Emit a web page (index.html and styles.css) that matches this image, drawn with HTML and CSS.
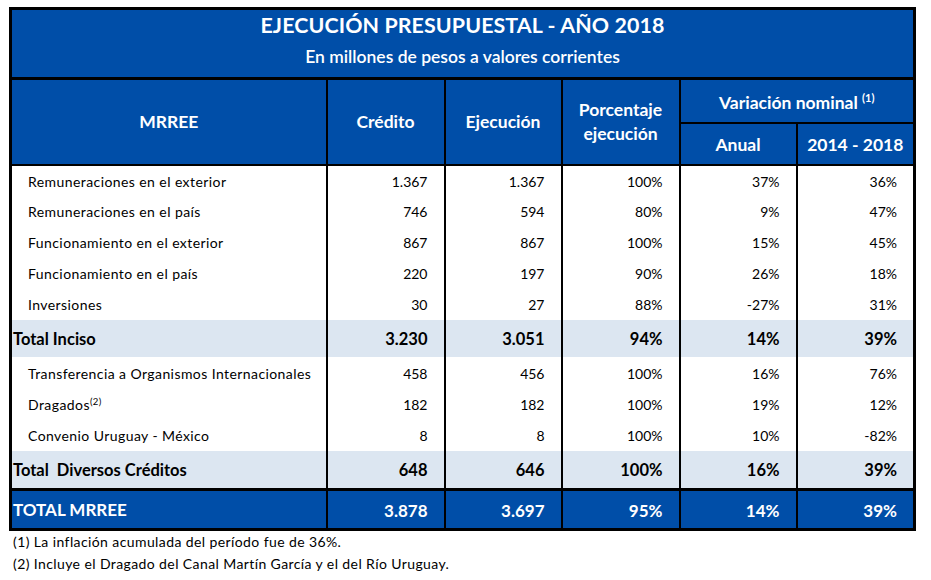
FILE: index.html
```html
<!DOCTYPE html>
<html lang="es">
<head>
<meta charset="utf-8">
<link rel="stylesheet" href="styles.css">
</head>
<body>
<div class="page">
  <table class="budget">
    <colgroup>
      <col class="c-name"><col class="c-2"><col class="c-3"><col class="c-4"><col class="c-5"><col class="c-6">
    </colgroup>
    <thead>
      <tr class="title-row">
        <th colspan="6">
          <div class="title">EJECUCIÓN PRESUPUESTAL - AÑO 2018</div>
          <div class="subtitle">En millones de pesos a valores corrientes</div>
        </th>
      </tr>
      <tr class="head-top">
        <th rowspan="2">MRREE</th>
        <th rowspan="2">Crédito</th>
        <th rowspan="2">Ejecución</th>
        <th rowspan="2">Porcentaje<br>ejecución</th>
        <th colspan="2" class="var">Variación nominal <sup>(1)</sup></th>
      </tr>
      <tr class="head-bottom">
        <th>Anual</th>
        <th>2014 - 2018</th>
      </tr>
    </thead>
    <tbody>
      <tr class="row first"><td>Remuneraciones en el exterior</td><td>1.367</td><td>1.367</td><td>100%</td><td>37%</td><td>36%</td></tr>
      <tr class="row"><td>Remuneraciones en el país</td><td>746</td><td>594</td><td>80%</td><td>9%</td><td>47%</td></tr>
      <tr class="row"><td>Funcionamiento en el exterior</td><td>867</td><td>867</td><td>100%</td><td>15%</td><td>45%</td></tr>
      <tr class="row"><td>Funcionamiento en el país</td><td>220</td><td>197</td><td>90%</td><td>26%</td><td>18%</td></tr>
      <tr class="row last"><td>Inversiones</td><td>30</td><td>27</td><td>88%</td><td>-27%</td><td>31%</td></tr>
      <tr class="subtotal"><td>Total Inciso</td><td>3.230</td><td>3.051</td><td>94%</td><td>14%</td><td>39%</td></tr>
      <tr class="row first2"><td>Transferencia a Organismos Internacionales</td><td>458</td><td>456</td><td>100%</td><td>16%</td><td>76%</td></tr>
      <tr class="row"><td>Dragados<sup>(2)</sup></td><td>182</td><td>182</td><td>100%</td><td>19%</td><td>12%</td></tr>
      <tr class="row"><td>Convenio Uruguay - México</td><td>8</td><td>8</td><td>100%</td><td>10%</td><td>-82%</td></tr>
      <tr class="subtotal"><td>Total&nbsp; Diversos Créditos</td><td>648</td><td>646</td><td>100%</td><td>16%</td><td>39%</td></tr>
      <tr class="grand"><td>TOTAL MRREE</td><td>3.878</td><td>3.697</td><td>95%</td><td>14%</td><td>39%</td></tr>
    </tbody>
  </table>
  <div class="notes">
    <p>(1) La inflación acumulada del período fue de 36%.</p>
    <p>(2) Incluye el Dragado del Canal Martín García y el del Río Uruguay.</p>
  </div>
</div>
</body>
</html>
```

FILE: styles.css
```css
html, body {
  margin: 0;
  padding: 0;
  background: #ffffff;
}

.page {
  padding: 7px 0 0 9px;
  font-family: Lato, "Open Sans", sans-serif;
  color: #000;
}

.budget {
  border-collapse: collapse;
  table-layout: fixed;
  border: 3px solid #000;
}

.c-name { width: 316px; }
.c-2 { width: 118px; }
.c-3 { width: 117px; }
.c-4 { width: 118px; }
.c-5 { width: 117px; }
.c-6 { width: 118px; }

.budget th {
  background: #004ea8;
  color: #fff;
  font-weight: 700;
  padding: 0;
  border: 2px solid #000;
}

.title-row th {
  height: 67px;
  border-bottom: 3px solid #000;
  vertical-align: top;
}

.title {
  font-size: 21.4px;
  line-height: 26px;
  padding-top: 2px;
  letter-spacing: 0.1px;
}

.subtitle {
  font-size: 17.5px;
  font-weight: 600;
  line-height: 22px;
  padding-top: 8px;
}

.head-top th {
  font-size: 17.5px;
  line-height: 24px;
  height: 40px;
}

.head-top th.var {
  height: 38px;
  padding-top: 4px;
}

.head-bottom th {
  font-size: 17.5px;
  line-height: 24px;
  height: 39px;
  padding-top: 1px;
}

.budget sup {
  font-size: 11px;
  vertical-align: 7px;
  line-height: 0;
}

.budget td {
  font-size: 14px;
  padding: 0 16px 0 0;
  text-align: right;
  border-left: 2px solid #000;
  border-right: 2px solid #000;
  white-space: nowrap;
}

.budget td:first-child {
  text-align: left;
  padding: 0 0 0 16px;
  letter-spacing: 0.42px;
}

.row td {
  height: 31px;
}

.row.first td { height: 30px; }
.row.first2 td { height: 32px; }

.row td sup {
  font-size: 9.5px;
  vertical-align: 5px;
}

.subtotal td {
  background: #dce6f1;
  font-weight: 700;
  font-size: 16.5px;
  height: 37px;
}

.subtotal td:first-child {
  padding-left: 1px;
  letter-spacing: 0;
}

.grand td {
  background: #004ea8;
  color: #fff;
  font-weight: 700;
  font-size: 17px;
  height: 35px;
  padding-top: 2px;
  border-top: 3px solid #000;
}

.grand td:first-child {
  padding-left: 1px;
  letter-spacing: 0;
}

.notes {
  padding: 0 0 0 4px;
  font-size: 14px;
  letter-spacing: 0.4px;
}

.notes p {
  margin: 0;
  line-height: 22px;
}
```
